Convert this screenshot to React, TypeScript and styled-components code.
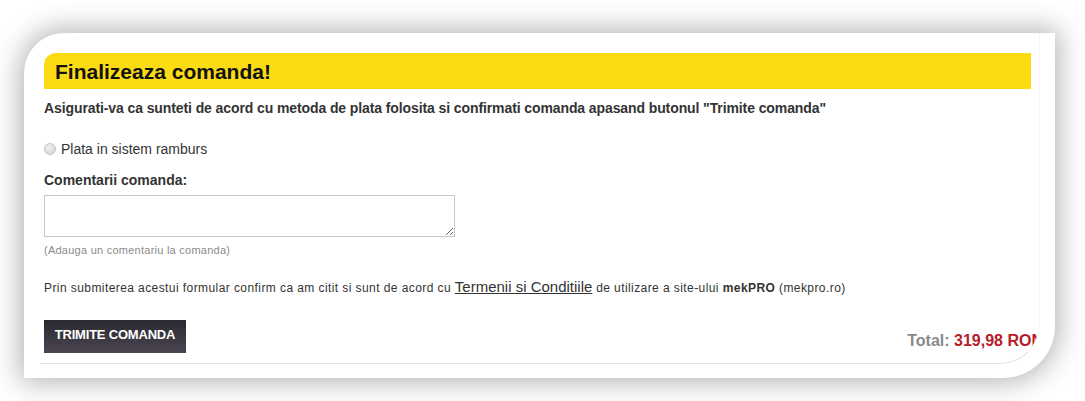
import * as React from 'react'
import styled, { createGlobalStyle } from 'styled-components'

const GlobalStyle = createGlobalStyle`
  html, body {
    margin: 0;
    padding: 0;
    background: #fff;
    font-family: 'Liberation Sans', Arial, sans-serif;
    color: #333;
  }
`

const Page = styled.div`
  width: 1085px;
  height: 401px;
  padding: 33px 0 0 24px;
  box-sizing: border-box;
  overflow: hidden;
`

const Card = styled.section`
  width: 1031px;
  height: 345px;
  background: #fff;
  border-radius: 40px 0 52px 0;
  box-shadow: 0 0 28px 4px rgba(0, 0, 0, 0.3);
  padding-left: 16px;
  box-sizing: border-box;
`

const Inner = styled.div`
  width: 1000px;
  height: 331px;
  box-sizing: border-box;
  padding: 20px 0 0 4px;
  border-bottom: 1px solid #e2e2e2;
  border-right: 1px solid #f4f4f4;
  border-bottom-right-radius: 40px;
  overflow: hidden;
`

const TitleBar = styled.h2`
  margin: 0 8px 0 0;
  height: 36px;
  background: #fbdc13;
  border-top-left-radius: 12px;
  padding-left: 11px;
  font-size: 21px;
  line-height: 37px;
  font-weight: bold;
  color: #111;
`

const Intro = styled.p`
  margin: 11px 0 0;
  font-size: 14px;
  line-height: 16px;
  letter-spacing: -0.1px;
  font-weight: bold;
  color: #333;
`

const RadioRow = styled.label`
  display: flex;
  align-items: center;
  gap: 5px;
  margin-top: 25px;
  font-size: 14px;
  line-height: 16px;
  color: #333;
`

const RadioDot = styled.span`
  width: 12px;
  height: 12px;
  border-radius: 50%;
  box-sizing: border-box;
  border: 1px solid #c4c4c4;
  background: radial-gradient(circle at 40% 35%, #f2f2f2, #cfcfcf);
`

const Label = styled.div`
  margin-top: 15px;
  font-size: 14px;
  line-height: 16px;
  font-weight: bold;
  color: #333;
`

const Comment = styled.textarea`
  display: block;
  margin-top: 7px;
  width: 411px;
  height: 42px;
  box-sizing: border-box;
  border: 1px solid #c8c8c8;
  resize: vertical;
  font-family: inherit;
`

const Hint = styled.div`
  margin-top: 7px;
  font-size: 11px;
  line-height: 13px;
  letter-spacing: 0.25px;
  color: #8a8a8a;
`

const Terms = styled.p`
  margin: 22px 0 0;
  font-size: 12px;
  line-height: 16px;
  letter-spacing: 0.42px;
  color: #333;
  a {
    font-size: 15px;
    letter-spacing: 0;
    color: #333;
    text-decoration: underline;
  }
`

const Footer = styled.div`
  display: flex;
  align-items: flex-end;
  justify-content: space-between;
  margin-top: 24px;
`

const SubmitButton = styled.button`
  width: 142px;
  height: 33px;
  border: 0;
  padding: 0 0 5px;
  background: linear-gradient(#2a292f, #4a4552);
  color: #fff;
  font-family: inherit;
  font-size: 13px;
  font-weight: bold;
  letter-spacing: -0.2px;
  text-transform: uppercase;
  cursor: pointer;
`

const Total = styled.div`
  margin-bottom: 3px;
  margin-right: -4px;
  font-size: 16px;
  font-weight: bold;
  color: #8a8a8a;
  white-space: nowrap;
`

const Price = styled.span`
  color: #b51c2a;
`

const App: React.FC = () => {
  return (
    <Page>
      <GlobalStyle />
      <Card>
        <Inner>
          <TitleBar>Finalizeaza comanda!</TitleBar>
          <Intro>
            Asigurati-va ca sunteti de acord cu metoda de plata folosita si confirmati comanda
            apasand butonul "Trimite comanda"
          </Intro>
          <RadioRow>
            <RadioDot />
            Plata in sistem ramburs
          </RadioRow>
          <Label>Comentarii comanda:</Label>
          <Comment />
          <Hint>(Adauga un comentariu la comanda)</Hint>
          <Terms>
            Prin submiterea acestui formular confirm ca am citit si sunt de acord cu{' '}
            <a href="#">Termenii si Conditiile</a> de utilizare a site-ului <b>mekPRO</b>{' '}
            (mekpro.ro)
          </Terms>
          <Footer>
            <SubmitButton>Trimite comanda</SubmitButton>
            <Total>
              Total: <Price>319,98 RON</Price>
            </Total>
          </Footer>
        </Inner>
      </Card>
    </Page>
  )
}

export default App
